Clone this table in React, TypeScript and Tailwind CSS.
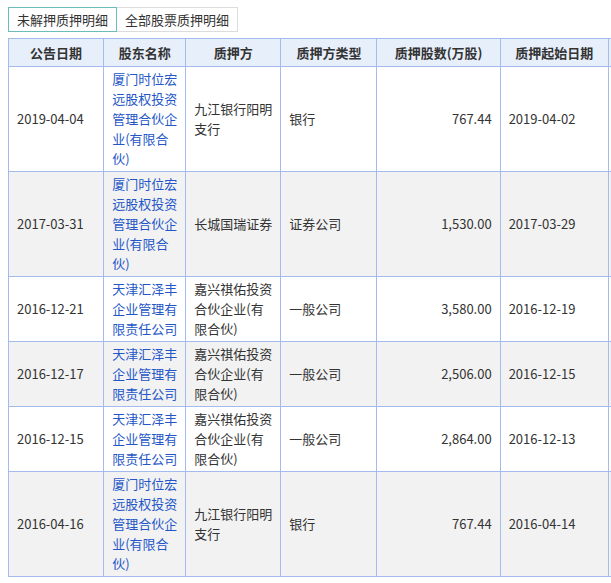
import * as React from "react";

type Row = {
  date: string;
  holder: string;
  pledgee: string;
  type: string;
  shares: string;
  start: string;
};

const ROWS: Row[] = [
  {
    date: "2019-04-04",
    holder: "厦门时位宏远股权投资管理合伙企业(有限合伙)",
    pledgee: "九江银行阳明支行",
    type: "银行",
    shares: "767.44",
    start: "2019-04-02",
  },
  {
    date: "2017-03-31",
    holder: "厦门时位宏远股权投资管理合伙企业(有限合伙)",
    pledgee: "长城国瑞证券",
    type: "证券公司",
    shares: "1,530.00",
    start: "2017-03-29",
  },
  {
    date: "2016-12-21",
    holder: "天津汇泽丰企业管理有限责任公司",
    pledgee: "嘉兴祺佑投资合伙企业(有限合伙)",
    type: "一般公司",
    shares: "3,580.00",
    start: "2016-12-19",
  },
  {
    date: "2016-12-17",
    holder: "天津汇泽丰企业管理有限责任公司",
    pledgee: "嘉兴祺佑投资合伙企业(有限合伙)",
    type: "一般公司",
    shares: "2,506.00",
    start: "2016-12-15",
  },
  {
    date: "2016-12-15",
    holder: "天津汇泽丰企业管理有限责任公司",
    pledgee: "嘉兴祺佑投资合伙企业(有限合伙)",
    type: "一般公司",
    shares: "2,864.00",
    start: "2016-12-13",
  },
  {
    date: "2016-04-16",
    holder: "厦门时位宏远股权投资管理合伙企业(有限合伙)",
    pledgee: "九江银行阳明支行",
    type: "银行",
    shares: "767.44",
    start: "2016-04-14",
  },
];

// last column is cut off by the window edge, only its border shows
const HEADERS = ["公告日期", "股东名称", "质押方", "质押方类型", "质押股数(万股)", "质押起始日期", ""];
const WIDTHS = ["w-[95px]", "w-[82px]", "w-[95px]", "w-[96px]", "w-[123px]", "w-[108px]", "w-[108px]"];

export default function App() {
  return (
    <div
      className="w-[611px] h-[583px] overflow-hidden bg-white text-[13px] leading-5 text-[#333]"
      style={{ fontFamily: '"Noto Sans CJK SC", "Noto Sans", sans-serif' }}
    >
      <div className="flex pl-2 pt-[7px]">
        <div className="h-[25px] w-[109px] border border-[#6cbcb8] flex items-center justify-center">
          未解押质押明细
        </div>
        <div className="h-[25px] w-[121px] border border-l-0 border-[#dcdcdc] flex items-center justify-center">
          全部股票质押明细
        </div>
      </div>

      <table className="ml-2 mt-[6px] w-[709px] table-fixed border-collapse">
        <colgroup>
          {WIDTHS.map((w, i) => (
            <col key={i} className={w} />
          ))}
        </colgroup>
        <thead>
          <tr className="h-[28px] bg-[#e7effb]">
            {HEADERS.map((h, i) => (
              <th key={i} className="border border-[#a3bbee] px-2 font-bold text-center whitespace-nowrap">
                {h}
              </th>
            ))}
          </tr>
        </thead>
        <tbody>
          {ROWS.map((r, i) => (
            <tr key={i} className={i % 2 === 1 ? "bg-[#f2f2f2]" : "bg-white"}>
              <td className="border border-[#a3bbee] px-2 py-[2px]">{r.date}</td>
              <td className="border border-[#a3bbee] px-2 py-[2px] text-[#2456c8] break-all">{r.holder}</td>
              <td className="border border-[#a3bbee] px-2 py-[2px] break-all">{r.pledgee}</td>
              <td className="border border-[#a3bbee] px-2 py-[2px]">{r.type}</td>
              <td className="border border-[#a3bbee] px-2 py-[2px] text-right">{r.shares}</td>
              <td className="border border-[#a3bbee] px-2 py-[2px]">{r.start}</td>
              <td className="border border-[#a3bbee] px-2 py-[2px]"></td>
            </tr>
          ))}
        </tbody>
      </table>
    </div>
  );
}
